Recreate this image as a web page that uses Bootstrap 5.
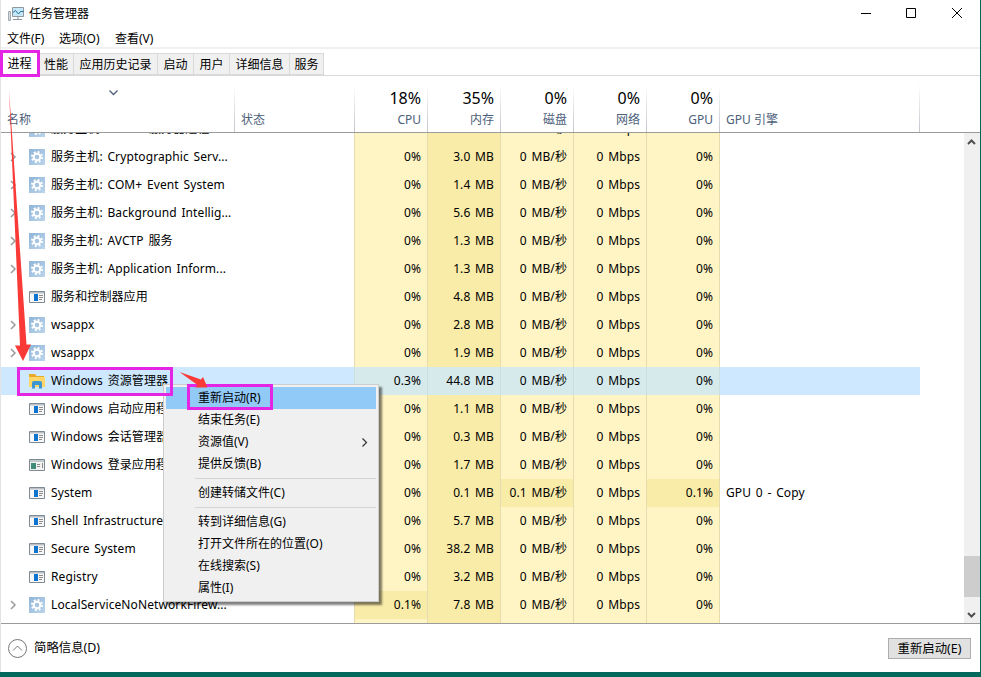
<!DOCTYPE html>
<html lang="zh-CN">
<head>
<meta charset="utf-8">
<title>任务管理器</title>
<link rel="stylesheet" href="https://cdn.jsdelivr.net/npm/bootstrap@5.3.0/dist/css/bootstrap.min.css">
<style>
html,body{height:677px;overflow:hidden}
body{font-family:"Noto Sans","Noto Sans CJK SC",sans-serif;font-size:12px;line-height:16px;color:#000;background:#00695c}
.win{width:980px;height:672px;background:#fff;border-left:1px solid #e3e3e3}
.titlebar{height:28px;padding-left:7px}
.titlebar .cap{margin-left:4px}
.winbtn{width:45px;height:28px}
.menubar{height:21px;border-bottom:2px solid #f1f1f1;padding:2px 0 0 6px}
.menubar a,.tabstrip a,.ctx a{color:#000;text-decoration:none;white-space:nowrap}
.menubar .m0{width:52px}.menubar .m1{width:56px}
.tabstrip{height:27px;border-bottom:1px solid #d9d9d9;padding-top:4px}
.tabstrip a{height:22px;line-height:22px;background:#f0f0f0;border:1px solid #d9d9d9;border-left:0;text-align:center}
.tabstrip a.cur{background:#fff;border-color:transparent;line-height:19px}
.t0{width:38px}.t1{width:35px}.t2{width:84px}.t3{width:36px}.t4{width:36px}.t5{width:60px}.t6{width:34px}
.grid-row{display:grid;grid-template-columns:234px 120px repeat(5,73px) 200px;width:919px}
.head{height:57px;border-bottom:1px solid #9b9b9b}
.hc{padding:13px 6px 0;height:56px;border-right:1px solid;border-image:linear-gradient(#fff 15%,#c0c5cc) 1;position:relative;color:#4c607a}
.hc .big{font-size:16px;line-height:18px;color:#000;height:23px}
.sortmark{position:absolute;left:108px;top:14px}
.rows{height:491px;border-bottom:1px solid #9b9b9b}
.list{margin-top:-18px;width:919px}
.viewport{height:490px;overflow:hidden;width:963px}
.proc{height:28px;line-height:28px;white-space:nowrap;word-spacing:1.5px;letter-spacing:.1px}
.proc>div{overflow:hidden}
.proc .v{text-align:right;padding-right:6px;background:#fff4c4;border-right:1px solid #e6dcb0}
.proc .v.hot{background:#f9eca8}
.proc .st{border-right:1px solid #e6dcb0}
.proc .eng{padding-left:6px}
.proc.sel{background:#cde8ff}
.proc.sel .v{background:#d6eaeb;border-color:#cbdfe0}
.proc.sel .st{border-color:#cbdfe0}
.proc .nm{display:flex;align-items:center}
.proc svg{flex:none}
.exp{width:8px;height:10px;margin:0 12px 0 8px}
.ico{width:16px;height:16px;margin-right:6px}
.sb{width:16px;background:#f0f0f0}
.thumb{height:41px;background:#cdcdcd;margin-bottom:9px}
.foot{height:48px;padding:0 9px 0 7px}
.foot .fewer{font-size:12.4px;margin-left:7px}
.restart{width:83px;height:21px;line-height:19px;background:#e1e1e1;border:1px solid #adadad;text-align:center;font-size:12.4px}
.ctx{position:absolute;left:163px;top:384px;width:216px;height:218px;background:#f0f0f0;border:1px solid #ccc;padding:2px;box-shadow:3px 3px 2px rgba(0,0,0,.5)}
.ctx a{display:flex;height:22px;line-height:22px;padding-left:32px;padding-right:8px;align-items:center;justify-content:space-between}
.ctx a.on{background:#91c9f7}
.ctx .sep{height:7px;padding:3px 0 0 29px}
.ctx .sep i{display:block;border-top:1px solid #d4d4d4}
.marks{position:absolute;left:0;top:0;pointer-events:none}
</style>
</head>
<body class="position-relative">
<svg width="0" height="0" class="position-absolute">
<defs>
<linearGradient id="gb" x2="1" y2="1"><stop stop-color="#8fb5d8"/><stop offset="1" stop-color="#bcd5ec"/></linearGradient>
<symbol id="gear" viewBox="0 0 16 16"><path fill="url(#gb)" d="M0 0h16v16H0z"/><g fill="none" stroke="#fff"><circle cx="8" cy="8" r="3.300" stroke-width="2"/><circle cx="8" cy="8" r="5" stroke-width="2" stroke-dasharray="1.960 1.967"/></g></symbol>
<symbol id="app" viewBox="0 0 16 16"><path fill="#f7f7f7" stroke="#7e8a94" d="M.5 2.500h15v11H.5z"/><path fill="#b9c0c6" d="M1 3h14v1.500H1z"/><path fill="#0d74cf" d="M5 5h4v7H5z"/><path stroke="#8c8c8c" d="M10 6.500h4M10 8.500h4M10 10.500h3"/></symbol>
<symbol id="logon" viewBox="0 0 16 16"><path fill="#f1f1f1" stroke="#7e8a94" d="M.5 2.500h15v11H.5z"/><path fill="#c4c9cc" d="M1 3h14v2H1z"/><path fill="#3e8c78" d="M2 6h5v6H2z"/><path stroke="#8c8c8c" d="M8 7.500h3M8 9.500h3M13.500 6v5"/></symbol>
<symbol id="folder" viewBox="0 0 16 16"><path fill="#e6a928" d="M0 1h6l1.500 2H15v4H0z"/><path fill="#ffd668" d="M0 4h16v10H0z"/><path fill="#3c96d2" d="M3 15.500V10q0-2 2-2h6q2 0 2 2v5.500h-3V12H6v3.500z"/></symbol>
<symbol id="chev" viewBox="0 0 8 10"><path fill="none" stroke="#9a9a9a" stroke-width="1.500" d="M2 1l4 4-4 4"/></symbol>
</defs></svg>

<main class="win d-flex flex-column">
<header class="titlebar d-flex align-items-center">
<svg width="17" height="16" viewBox="0 0 17 16"><path fill="#d5dadd" stroke="#a3acb2" d="M.5 5.500h2v9h-2z"/><path fill="#c5e7f7" stroke="#8d989f" d="M4.500 1.500h11v9h-11z"/><path fill="none" stroke="#1d769f" d="M5 6.500l2.500-2 3 3.500 2-2.500h3"/><path stroke="#89949c" d="M10 11v2M5 13.500h9"/></svg>
<span class="cap">任务管理器</span>
<div class="d-flex ms-auto">
<svg class="winbtn" viewBox="0 0 45 28"><path stroke="#000" d="M16 13.500h10"/></svg>
<svg class="winbtn" viewBox="0 0 45 28"><path fill="none" stroke="#000" d="M16.500 8.500h9v9h-9z"/></svg>
<svg class="winbtn" viewBox="0 0 45 28"><path stroke="#000" d="M17 8l10 10M27 8l-10 10"/></svg>
</div>
</header>
<nav class="menubar d-flex align-items-center"><a class="m0" href="#">文件(F)</a><a class="m1" href="#">选项(O)</a><a href="#">查看(V)</a></nav>
<nav class="tabstrip d-flex"><a class="t0 cur" href="#">进程</a><a class="t1" href="#">性能</a><a class="t2" href="#">应用历史记录</a><a class="t3" href="#">启动</a><a class="t4" href="#">用户</a><a class="t5" href="#">详细信息</a><a class="t6" href="#">服务</a></nav>
<section class="head"><div class="grid-row" id="head"></div></section>
<section class="rows d-flex">
<div class="viewport"><div class="list" id="list"></div></div>
<div class="sb d-flex flex-column">
<svg width="16" height="17" viewBox="0 0 16 17"><path fill="none" stroke="#505050" stroke-width="2" d="M4 11l3.500-3.500L11 11"/></svg>
<div class="thumb mt-auto"></div>
<svg width="16" height="17" viewBox="0 0 16 17"><path fill="none" stroke="#505050" stroke-width="2" d="M4 7l3.500 3.500L11 7"/></svg>
</div>
</section>
<footer class="foot d-flex align-items-center justify-content-between">
<div class="d-flex align-items-center"><svg width="19" height="19" viewBox="0 0 19 19"><circle cx="9.500" cy="9.500" r="9" fill="#fff" stroke="#777"/><path fill="none" stroke="#777" d="M5 11.500l4.500-4.500 4.500 4.500"/></svg><span class="fewer">简略信息(D)</span></div>
<button class="restart p-0">重新启动(E)</button>
</footer>
</main>
<div class="ctx">
<a class="on" href="#">重新启动(R)</a><a href="#">结束任务(E)</a><a href="#">资源值(V)<svg width="7" height="9" viewBox="0 0 7 9"><path fill="none" stroke="#333" stroke-width="1.200" d="M1.500.5l4 4-4 4"/></svg></a><a href="#">提供反馈(B)</a>
<div class="sep"><i></i></div><a href="#">创建转储文件(C)</a><div class="sep"><i></i></div>
<a href="#">转到详细信息(G)</a><a href="#">打开文件所在的位置(O)</a><a href="#">在线搜索(S)</a><a href="#">属性(I)</a>
</div>
<svg class="marks" width="981" height="677" viewBox="0 0 981 677">
<g fill="none" stroke="#e425e4" stroke-width="3"><path d="M1.500 51.500h37v24h-37zM18.500 368.500h153v26h-153zM188.500 385.500h83v23h-83z"/></g>
<path fill="#f93a37" d="M9 90L26.500 344.500H31L23 361 15 345.500H20z"/>
<path fill="#f93a37" d="M179.500 372L201 379.500L203 377L207.500 387.500H195L197.500 385z"/>
</svg>
<script>
const heads=[['','名称'],['','状态'],['18%','CPU'],['35%','内存'],['0%','磁盘'],['0%','网络'],['0%','GPU'],['','GPU 引擎']];
document.getElementById('head').innerHTML=heads.map(([b,t],i)=>`<div class="hc ${b?'text-end':''}">${i?'':'<svg class="sortmark" width="9" height="6" viewBox="0 0 9 6"><path fill="none" stroke="#4c607a" stroke-width="1.300" d="M.5.5l4 4 4-4"/></svg>'}<div class="big">${b}</div><div>${t}</div></div>`).join('');
const H='服务主机: ';
// icon, expandable, name, cpu, memory, disk, gpu, engine
const rows=[
['gear',1,H+'DCOM 服务器进程...','0%','6.8'],
['gear',1,H+'Cryptographic Serv...','0%','3.0'],
['gear',1,H+'COM+ Event System','0%','1.4'],
['gear',1,H+'Background Intellig...','0%','5.6'],
['gear',1,H+'AVCTP 服务','0%','1.3'],
['gear',1,H+'Application Inform...','0%','1.3'],
['app',0,'服务和控制器应用','0%','4.8'],
['gear',1,'wsappx','0%','2.8'],
['gear',1,'wsappx','0%','1.9'],
['folder',0,'Windows 资源管理器','0.3%','44.8'],
['app',0,'Windows 启动应用程序','0%','1.1'],
['app',0,'Windows 会话管理器','0%','0.3'],
['logon',0,'Windows 登录应用程序','0%','1.7'],
['app',0,'System','0%','0.1','0.1','0.1%','GPU 0 - Copy'],
['app',0,'Shell Infrastructure','0%','5.7'],
['app',0,'Secure System','0%','38.2'],
['app',0,'Registry','0%','3.2'],
['gear',1,'LocalServiceNoNetworkFirew...','0.1%','7.8'],
['',0,'','','']];
document.getElementById('list').innerHTML=rows.map(([ic,ex,n,c,m,d='0',g='0%',e=''])=>`<div class="grid-row proc ${ic=='folder'?'sel':''}"><div class="nm"><svg class="exp">${ex?'<use href="#chev"/>':''}</svg><svg class="ico">${ic?`<use href="#${ic}"/>`:''}</svg><span>${n}</span></div><div class="st"></div><div class="v ${c=='0.1%'?'hot':''}">${c}</div><div class="v hot">${m?m+' MB':''}</div><div class="v ${d!='0'?'hot':''}">${ic?d+' MB/秒':''}</div><div class="v">${ic?'0 Mbps':''}</div><div class="v ${g!='0%'?'hot':''}">${ic?g:''}</div><div class="eng">${e}</div></div>`).join('');
</script>
<script src="https://cdn.jsdelivr.net/npm/bootstrap@5.3.0/dist/js/bootstrap.bundle.min.js"></script>
</body>
</html>
